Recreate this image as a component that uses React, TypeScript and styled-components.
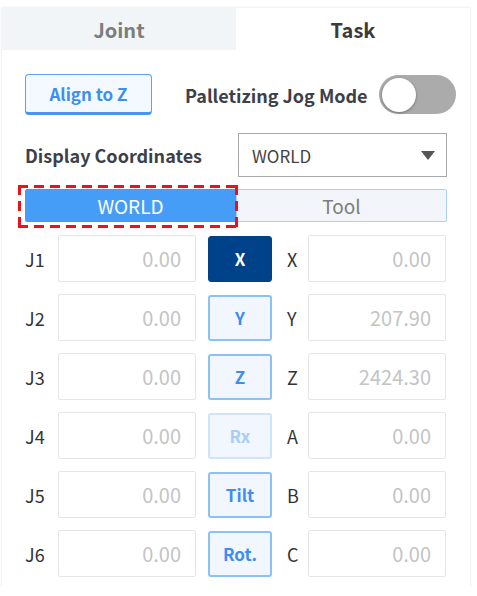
import styled, { createGlobalStyle } from "styled-components";

const GlobalStyle = createGlobalStyle`
  body {
    margin: 0;
    background: #ffffff;
    font-family: "Noto Sans CJK KR", "Noto Sans", sans-serif;
  }
`;

const Panel = styled.div`
  margin: 8px 0 0 2px;
  width: 468px;
  height: 579px;
  box-sizing: border-box;
  background: #fff;
  box-shadow: 0 0 3px rgba(0, 0, 0, 0.12);
  display: flex;
  flex-direction: column;
`;

const Tabs = styled.div`
  display: grid;
  grid-template-columns: 234px 234px;
  height: 42px;
`;

const Tab = styled.div<{ $active?: boolean }>`
  display: flex;
  align-items: center;
  justify-content: center;
  font-size: 20px;
  font-weight: 700;
  color: ${(p) => (p.$active ? "#3b3b3b" : "#7d7d7d")};
  background: ${(p) => (p.$active ? "#ffffff" : "#f2f5f8")};
`;

const Body = styled.div`
  padding: 24px 23px 0 23px;
  display: flex;
  flex-direction: column;
`;

const TopRow = styled.div`
  display: flex;
  align-items: center;
  height: 41px;
`;

const AlignButton = styled.button`
  flex-shrink: 0;
  width: 127px;
  height: 41px;
  box-sizing: border-box;
  border: 1px solid #5aa2f2;
  border-bottom: 3px solid #4a95ee;
  border-radius: 4px;
  background: #f4f9ff;
  color: #3d8ef0;
  font-family: inherit;
  font-size: 17px;
  font-weight: 700;
  padding: 0;
`;

const ModeLabel = styled.span`
  margin-left: 33px;
  white-space: nowrap;
  font-size: 18px;
  font-weight: 700;
  color: #3c4049;
`;

const Switch = styled.div`
  flex-shrink: 0;
  margin-left: 11px;
  width: 77px;
  height: 39px;
  border-radius: 20px;
  background: #ababab;
  display: flex;
  align-items: center;
  padding: 0 3px;
  box-sizing: border-box;
`;

const Knob = styled.div`
  width: 34px;
  height: 34px;
  border-radius: 50%;
  background: #fff;
  box-shadow: 0 1px 3px rgba(0, 0, 0, 0.35);
`;

const CoordRow = styled.div`
  margin-top: 18px;
  display: flex;
  align-items: center;
  justify-content: space-between;
  height: 44px;
`;

const CoordLabel = styled.span`
  font-size: 18px;
  font-weight: 700;
  color: #3c4049;
`;

const Select = styled.div`
  width: 209px;
  height: 44px;
  box-sizing: border-box;
  border: 1px solid #a9a9a9;
  display: flex;
  align-items: center;
  justify-content: space-between;
  padding: 0 11px 0 13px;
  font-size: 17px;
  color: #444;
`;

const Caret = styled.span`
  width: 0;
  height: 0;
  border-left: 7px solid transparent;
  border-right: 7px solid transparent;
  border-top: 9px solid #555;
`;

const Segmented = styled.div`
  position: relative;
  margin-top: 12px;
  display: grid;
  grid-template-columns: 211px 211px;
  height: 33px;
`;

const Segment = styled.div<{ $active?: boolean }>`
  display: flex;
  align-items: center;
  justify-content: center;
  font-size: 19px;
  box-sizing: border-box;
  border-radius: ${(p) => (p.$active ? "2px 0 0 2px" : "0 2px 2px 0")};
  background: ${(p) => (p.$active ? "#459df8" : "#f2f6fa")};
  color: ${(p) => (p.$active ? "#ffffff" : "#7d7d7d")};
  border: 1px solid ${(p) => (p.$active ? "#459df8" : "#a9d0f6")};
`;

/* dashed red frame with long dashes, drawn as gradient strips */
const Highlight = styled.div`
  position: absolute;
  left: -7px;
  top: -4px;
  width: 220px;
  height: 43px;
  pointer-events: none;
  background-image:
    repeating-linear-gradient(90deg, #e8141c 0 10px, transparent 10px 16px),
    repeating-linear-gradient(90deg, #e8141c 0 10px, transparent 10px 16px),
    repeating-linear-gradient(180deg, #e8141c 0 10px, transparent 10px 16px),
    repeating-linear-gradient(180deg, #e8141c 0 10px, transparent 10px 16px);
  background-size: 100% 3px, 100% 3px, 3px 100%, 3px 100%;
  background-position: 0 0, 0 100%, 0 0, 100% 0;
  background-repeat: no-repeat;
`;

const Grid = styled.div`
  margin-top: 13px;
  display: flex;
  flex-direction: column;
  gap: 12px;
`;

const Row = styled.div`
  display: grid;
  grid-template-columns: 33px 138px 12px 64px 15px 21px 138px;
  align-items: center;
  height: 47px;
`;

const AxisLabel = styled.span`
  font-size: 18px;
  color: #333;
`;

const ValueBox = styled.div`
  height: 47px;
  box-sizing: border-box;
  border: 1px solid #e6e6e6;
  border-radius: 2px;
  display: flex;
  align-items: center;
  justify-content: flex-end;
  padding-right: 14px;
  font-size: 20px;
  color: #c4c4c4;
`;

const Gap = styled.span``;

type AxisState = "active" | "normal" | "disabled";

const AxisButton = styled.div<{ $state: AxisState }>`
  height: 46px;
  box-sizing: border-box;
  border-radius: 3px;
  display: flex;
  align-items: center;
  justify-content: center;
  font-size: 17px;
  font-weight: 700;
  background: ${(p) => (p.$state === "active" ? "#00428a" : "#f2f7ff")};
  color: ${(p) =>
    p.$state === "active"
      ? "#ffffff"
      : p.$state === "disabled"
      ? "#a9cef6"
      : "#3d8ef0"};
  border: ${(p) =>
    p.$state === "active"
      ? "1px solid #00428a"
      : p.$state === "disabled"
      ? "2px solid #cfe3fb"
      : "2px solid #8cc1f8"};
`;

const rows: {
  joint: string;
  jv: string;
  axis: string;
  state: AxisState;
  task: string;
  tv: string;
}[] = [
  { joint: "J1", jv: "0.00", axis: "X", state: "active", task: "X", tv: "0.00" },
  { joint: "J2", jv: "0.00", axis: "Y", state: "normal", task: "Y", tv: "207.90" },
  { joint: "J3", jv: "0.00", axis: "Z", state: "normal", task: "Z", tv: "2424.30" },
  { joint: "J4", jv: "0.00", axis: "Rx", state: "disabled", task: "A", tv: "0.00" },
  { joint: "J5", jv: "0.00", axis: "Tilt", state: "normal", task: "B", tv: "0.00" },
  { joint: "J6", jv: "0.00", axis: "Rot.", state: "normal", task: "C", tv: "0.00" },
];

const App = () => {
  return (
    <>
      <GlobalStyle />
      <Panel>
        <Tabs>
          <Tab>Joint</Tab>
          <Tab $active>Task</Tab>
        </Tabs>
        <Body>
          <TopRow>
            <AlignButton>Align to Z</AlignButton>
            <ModeLabel>Palletizing Jog Mode</ModeLabel>
            <Switch>
              <Knob />
            </Switch>
          </TopRow>
          <CoordRow>
            <CoordLabel>Display Coordinates</CoordLabel>
            <Select>
              WORLD
              <Caret />
            </Select>
          </CoordRow>
          <Segmented>
            <Segment $active>WORLD</Segment>
            <Segment>Tool</Segment>
            <Highlight />
          </Segmented>
          <Grid>
            {rows.map((r) => (
              <Row key={r.joint}>
                <AxisLabel>{r.joint}</AxisLabel>
                <ValueBox>{r.jv}</ValueBox>
                <Gap />
                <AxisButton $state={r.state}>{r.axis}</AxisButton>
                <Gap />
                <AxisLabel>{r.task}</AxisLabel>
                <ValueBox>{r.tv}</ValueBox>
              </Row>
            ))}
          </Grid>
        </Body>
      </Panel>
    </>
  );
};

export default App;
